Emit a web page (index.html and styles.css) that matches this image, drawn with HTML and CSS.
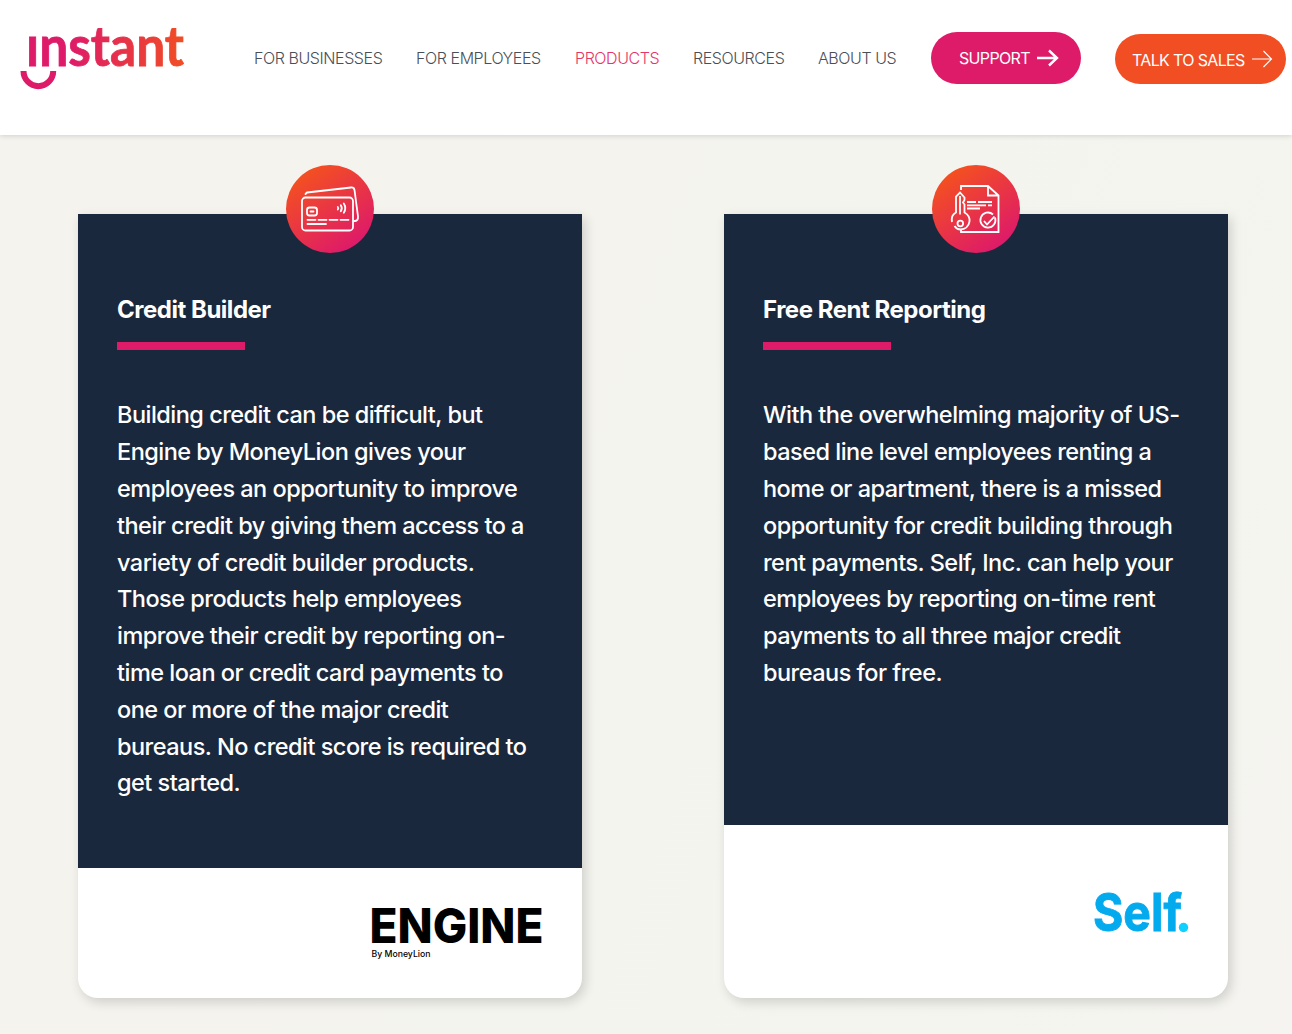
FILE: index.html
```
<!DOCTYPE html>
<html lang="en">
<head>
    <meta charset="UTF-8">
    <meta name="viewport" content="width=device-width, initial-scale=1.0">
    <title>Instant - Products</title>
    <link rel="stylesheet" href="styles.css">
</head>
<body>
    <header class="site-header">
        <a href="#" class="logo" aria-label="instant">
            <svg width="166" height="64" viewBox="0 0 166 64">
                <defs>
                    <linearGradient id="logo-gradient" gradientUnits="userSpaceOnUse" x1="0" y1="0" x2="166" y2="0">
                        <stop offset="0.3" stop-color="#de1b68"/>
                        <stop offset="1" stop-color="#f14e23"/>
                    </linearGradient>
                </defs>
                <text class="logo-text" x="6" y="38.500" textLength="158" lengthAdjust="spacingAndGlyphs" fill="url(#logo-gradient)" stroke="url(#logo-gradient)">ınstant</text>
                <path d="M3.500 44a14.700 15 0 0 0 29.700 0" fill="none" stroke="#de1b68" stroke-width="6"/>
            </svg>
        </a>
        <nav class="nav-bar">
            <a href="#" class="nav-1">FOR BUSINESSES</a>
            <a href="#" class="nav-2">FOR EMPLOYEES</a>
            <a href="#" class="nav-3 active">PRODUCTS</a>
            <a href="#" class="nav-4">RESOURCES</a>
            <a href="#" class="nav-5">ABOUT US</a>
        </nav>
        <a href="#" class="btn btn-support">
            <span>SUPPORT</span>
            <svg width="22" height="18" viewBox="0 0 22 18" fill="none" stroke="#fff" stroke-width="2.400"><path d="M0 9h20M12 1.500l8 7.500-8 7.500"/></svg>
        </a>
        <a href="#" class="btn btn-sales">
            <span>TALK TO SALES</span>
            <svg width="21" height="18" viewBox="0 0 21 18" fill="none" stroke="#fff" stroke-width="1.200"><path d="M0 9h19.500M11.500 1l8 8-8 8"/></svg>
        </a>
    </header>

    <main class="products">
        <article class="card">
            <div class="card-icon">
                <svg width="88" height="88" viewBox="0 0 88 88" fill="none" stroke="#fff" stroke-width="1.800" stroke-linecap="round" stroke-linejoin="round">
                    <rect x="16" y="32.500" width="51" height="33" rx="3.500"/>
                    <path d="M19.500 29l1.500-1.500 44-5q3-.3 3.500 2.500l3.500 26.500q.3 4-3 4.500h-1"/>
                    <rect x="21" y="42.500" width="10" height="8" rx="2.500"/>
                    <path d="M24.500 46.500h3M21.500 54.800h8M32.500 54.800h8M43.500 54.800h8M54.500 54.800h8M21.500 59h18.500M51.800 42q1 1.200 0 2.500M54.800 40.300q2 3 0 6M57.800 38.500q3 4.700 0 9.300"/>
                </svg>
            </div>
            <div class="card-body">
                <h2>Credit Builder</h2>
                <p>Building credit can be difficult, but<br>Engine by MoneyLion gives your<br>employees an opportunity to improve<br>their credit by giving them access to a<br>variety of credit builder products.<br>Those products help employees<br>improve their credit by reporting on-<br>time loan or credit card payments to<br>one or more of the major credit<br>bureaus. No credit score is required to<br>get started.</p>
            </div>
            <div class="card-footer engine">
                <svg width="172" height="52" viewBox="0 0 172 52">
                    <text class="engine-name" x="-1.500" y="36" textLength="174" lengthAdjust="spacingAndGlyphs">ENGINE</text>
                    <text class="engine-by" x="0.500" y="49.500" textLength="59" lengthAdjust="spacingAndGlyphs">By MoneyLion</text>
                </svg>
            </div>
        </article>

        <article class="card">
            <div class="card-icon">
                <svg width="88" height="88" viewBox="0 0 88 88" fill="none" stroke="#fff" stroke-width="1.800">
                    <path d="M29 25v-4h27l10.500 9.500v36.500h-37.500v-2M56 21v9.500h10.500"/>
                    <path d="M35 37h9M46 37h14M35 40.300h19M56 40.300h4M35 43.500h13"/>
                    <path d="M20 57c-.8-4.500 1-8 4-9.500v-16l4-4 4.500 5v2.500l-1.500 2.500 1.500 2v8c3.500 2 5.500 5 5 9-.8 5-4.500 8-9 8-2.500 0-4.500-1.200-6-3.500M28 31v18.500"/>
                    <circle cx="28.300" cy="58.500" r="2.800"/>
                    <path d="M61 49.500a7.500 7.500 0 1 0 2 3"/>
                    <path d="M52 56l3 3.500 7.500-8"/>
                </svg>
            </div>
            <div class="card-body">
                <h2>Free Rent Reporting</h2>
                <p>With the overwhelming majority of US-<br>based line level employees renting a<br>home or apartment, there is a missed<br>opportunity for credit building through<br>rent payments. Self, Inc. can help your<br>employees by reporting on-time rent<br>payments to all three major credit<br>bureaus for free.</p>
            </div>
            <div class="card-footer self">
                <svg width="96" height="46" viewBox="0 0 96 46">
                    <text class="self-name" x="0" y="41" textLength="89" lengthAdjust="spacingAndGlyphs">Self</text>
                    <circle cx="90.500" cy="37.500" r="4.700" fill="#0fd0ff"/>
                </svg>
            </div>
        </article>
    </main>
</body>
</html>
```

FILE: styles.css
```
* {
    box-sizing: border-box;
}
body {
    margin: 0;
    height: 1034px;
    overflow: hidden;
    font-family: Inter, Roboto, sans-serif;
    background: linear-gradient(110deg, #f4f3ee, #f4f4ef 50%, #f5f4f0);
}
a {
    text-decoration: none;
}
svg {
    display: block;
    flex-shrink: 0;
    overflow: visible;
}

/* Header */
.site-header {
    position: relative;
    display: flex;
    align-items: flex-start;
    height: 135px;
    padding-left: 20px;
    background: #fff;
    box-shadow: 0 1px 5px rgba(0, 0, 0, 0.14);
}
.logo {
    width: 234px;
    padding-top: 27px;
}
.logo-text {
    font-family: Lato, sans-serif;
    font-size: 55px;
    font-weight: 700;
    stroke-width: 0.8px;
}
.nav-bar {
    display: flex;
    gap: 34px;
    padding-top: 46px;
    width: 677px;
}
.nav-bar a {
    font-size: 16px;
    font-weight: 300;
    line-height: 24px;
    color: #4a4f57;
    white-space: nowrap;
    letter-spacing: -0.42px;
}
.nav-bar .active {
    color: #e63568;
}
.nav-1 { width: 128px; }
.nav-2 { width: 125px; }
.nav-3 { width: 84px; }
.nav-4 { width: 91px; }
.nav-5 { width: 78px; }
.btn {
    display: flex;
    align-items: center;
    color: #fff;
    font-size: 16px;
    white-space: nowrap;
    letter-spacing: -0.65px;
}
.btn span {
    flex-shrink: 0;
}
.btn-support {
    width: 150px;
    height: 52px;
    margin: 32px 34px 0 0;
    padding-left: 28px;
    gap: 8px;
    border-radius: 26px;
    background: #de1b68;
}
.btn-support span {
    width: 70px;
}
.btn-sales {
    width: 171px;
    height: 50px;
    margin-top: 34px;
    padding-left: 17px;
    gap: 7px;
    border-radius: 25px;
    background: #f24e23;
}
.btn-sales span {
    width: 113px;
    padding-top: 2px;
}

/* Product cards */
.products {
    display: flex;
    gap: 142px;
    padding: 79px 64px 0 78px;
}
.card {
    position: relative;
    display: flex;
    flex-direction: column;
    width: 504px;
    height: 784px;
    background: #fff;
    border-radius: 0 0 20px 20px;
    box-shadow: 3px 4px 12px rgba(0, 0, 0, 0.16);
}
.card-icon {
    position: absolute;
    top: -49px;
    left: 208px;
    width: 88px;
    height: 88px;
    border-radius: 50%;
    background: linear-gradient(145deg, #f4511f 12%, #de1b68 85%);
}
.card-body {
    flex: 1;
    padding: 78px 39px 0;
    color: #fff;
    background: #1a283d;
}
.card-body h2 {
    margin: 0;
    font-size: 24px;
    font-weight: 700;
    line-height: 36px;
    white-space: nowrap;
    letter-spacing: -0.48px;
}
.card-body h2::after {
    content: "";
    display: block;
    width: 128px;
    height: 8px;
    margin-top: 14px;
    background: #de1b68;
}
.card-body p {
    margin: 47.4px 0 0;
    font-size: 23.5px;
    font-weight: 500;
    line-height: 36.8px;
    white-space: nowrap;
    letter-spacing: -0.52px;
}
.card-footer {
    display: flex;
    justify-content: flex-end;
    padding-right: 39px;
}
.engine {
    height: 130px;
    padding-top: 39px;
}
.engine-name {
    font-size: 48.5px;
    font-weight: 800;
}
.engine-by {
    font-size: 9px;
    font-weight: 500;
}
.self {
    height: 173px;
    padding-top: 65px;
}
.self-name {
    font-size: 52px;
    font-weight: 700;
    fill: #04aaee;
    stroke: #04aaee;
    stroke-width: 0.9px;
}
```
